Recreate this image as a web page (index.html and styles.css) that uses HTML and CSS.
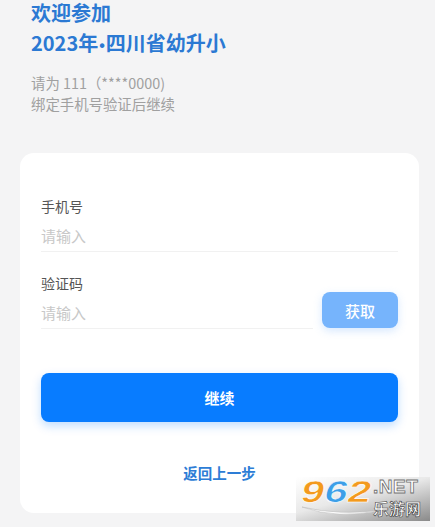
FILE: index.html
```html
<!DOCTYPE html>
<html lang="zh-CN">
<head>
<meta charset="utf-8">
<title>绑定手机号</title>
<link rel="stylesheet" href="styles.css">
</head>
<body>
<div class="page">
  <header class="head">
    <h1 class="title"><span class="t1">欢迎参加</span><span class="t2">2023年<span class="dot">•</span>四川省幼升小</span></h1>
    <p class="sub">请为 111（****0000)<br>绑定手机号验证后继续</p>
  </header>
  <main class="card">
    <div class="field">
      <div class="label">手机号</div>
      <div class="input">请输入</div>
    </div>
    <div class="field field-code">
      <div class="label">验证码</div>
      <div class="code-row">
        <div class="input input-code">请输入</div>
        <button class="btn-get">获取</button>
      </div>
    </div>
    <button class="btn-main">继续</button>
    <div class="back">返回上一步</div>
  </main>
</div>
<div class="wm">
  <svg class="wm-swoosh" width="84" height="14" viewBox="0 0 84 14"><path d="M2 2 Q38 15 82 5 Q40 11 2 2Z" fill="#fff" stroke="#bdbdbd" stroke-width="0.6"/></svg>
  <span class="wm-num"><span class="o">9</span><span class="b">6</span><span class="o">2</span></span>
  <span class="wm-net">.NET</span>
  <span class="wm-cn">乐游网</span>
</div>
</body>
</html>
```
FILE: styles.css
```css
* { box-sizing: border-box; }
html, body { margin: 0; padding: 0; }
body {
  background: #f4f4f5;
  font-family: "Noto Sans CJK SC", "Noto Sans", sans-serif;
  width: 435px;
  height: 527px;
  overflow: hidden;
  position: relative;
}
.page { padding: 0 16px 0 20px; }
.head { padding-left: 11px; padding-top: 1px; }
.title {
  margin: 0;
  font-size: 20px;
  line-height: 23px;
  font-weight: 700;
  color: #2b79d3;
}
.t1, .t2 { display: block; }
.t2 { margin-top: 7px; }
.dot {
  font-family: "Liberation Sans", sans-serif;
  font-size: 16px;
  margin: 0 1px;
}
.sub {
  margin: 15px 0 0;
  font-size: 14.4px;
  line-height: 21px;
  color: #a0a0a0;
}
.card {
  margin-top: 39px;
  width: 399px;
  background: #fff;
  border-radius: 14px;
  padding: 43px 21px 30px;
}
.label {
  font-size: 14px;
  line-height: 20px;
  color: #555;
  margin-bottom: 4px;
}
.input {
  height: 32px;
  line-height: 31px;
  font-size: 15px;
  color: #c8c8c8;
  border-bottom: 1px solid #f1f1f1;
}
.field-code { margin-top: 21px; }
.code-row {
  display: flex;
  align-items: flex-end;
  gap: 9px;
}
.input-code { flex: 1; }
.btn-get {
  width: 76px;
  height: 36px;
  margin-top: -5px;
  margin-bottom: 1px;
  border: none;
  border-radius: 8px;
  background: #76b4fc;
  color: #fff;
  font-family: inherit;
  font-size: 15px;
  font-weight: 500;
  box-shadow: 0 3px 8px rgba(118, 180, 252, 0.3);
}
.btn-main {
  display: block;
  width: 100%;
  height: 49px;
  margin-top: 44px;
  border: none;
  border-radius: 8px;
  background: #087cff;
  color: #fff;
  font-family: inherit;
  font-size: 15px;
  font-weight: 700;
  box-shadow: 0 4px 10px rgba(8, 124, 255, 0.25);
}
.back {
  margin-top: 41px;
  text-align: center;
  font-size: 14.5px;
  line-height: 20px;
  font-weight: 700;
  color: #2d7dd6;
}
.wm {
  position: absolute;
  left: 296px;
  top: 477px;
  width: 134px;
  height: 44px;
  background: linear-gradient(165deg, #ffffff 0%, #e9e9e9 45%, #8a8a8a 100%);
}
.wm-num {
  position: absolute;
  display: block;
  left: 9px;
  top: 1px;
  font-family: "Liberation Sans", sans-serif;
  font-size: 30px;
  line-height: 28px;
  font-weight: 700;
  transform-origin: left top;
  transform: skewX(-14deg) scaleX(1.4);
  -webkit-text-stroke: 0.6px #fff;
}
.wm-num .o { color: #f39a1e; }
.wm-num .b { color: #3d9fe8; }
.wm-net {
  position: absolute;
  left: 77px;
  top: 1px;
  font-family: "Liberation Sans", sans-serif;
  font-size: 19px;
  line-height: 18px;
  font-weight: 700;
  color: #fff;
  -webkit-text-stroke: 0.8px #6f6f6f;
  letter-spacing: 0.5px;
}
.wm-cn {
  position: absolute;
  left: 77px;
  top: 22px;
  font-size: 16px;
  line-height: 19px;
  font-weight: 700;
  color: #fff;
  -webkit-text-stroke: 0.6px #444;
}
.wm-swoosh { position: absolute; left: 4px; top: 28px; }
```
